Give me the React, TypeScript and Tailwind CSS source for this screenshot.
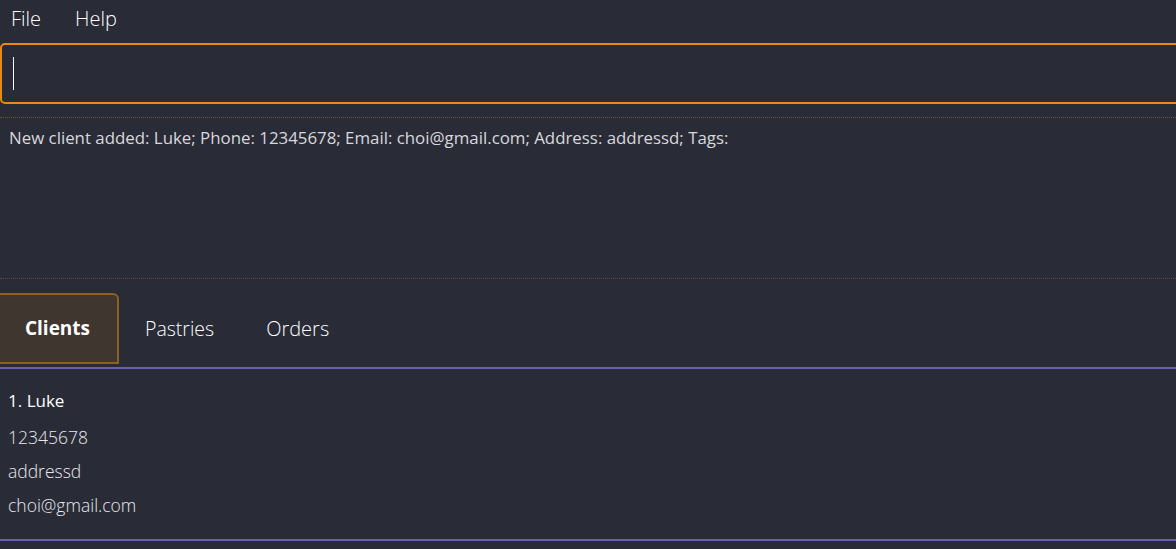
import React from "react";

const font = { fontFamily: '"Open Sans", "Noto Sans", sans-serif' };

interface Client {
  name: string;
  phone: string;
  address: string;
  email: string;
}

const clients: Client[] = [
  { name: "Luke", phone: "12345678", address: "addressd", email: "choi@gmail.com" },
];

const tabs = ["Clients", "Pastries", "Orders"];

export default function App() {
  return (
    <div className="w-[1176px] h-[549px] overflow-hidden bg-[#292b37] text-white flex flex-col" style={font}>
      {/* menu bar */}
      <div className="h-[38px] flex items-center gap-[34px] pl-[11px] text-[20px] font-light text-white">
        <span>File</span>
        <span>Help</span>
      </div>

      {/* command box */}
      <div className="mt-[5px] h-[61px] w-[1190px] border-2 border-[#e8891a] rounded-[5px] flex items-center pl-[11px]">
        <div className="w-px h-[33px] bg-white" />
      </div>

      {/* result display */}
      <div className="mt-[13px] border-t border-dotted border-[#6b5438]" />
      <div className="h-[160px] pl-[9px] pt-[8px] text-[16.85px] leading-[24px] text-[#d8d8dc]">
        New client added: Luke; Phone: 12345678; Email: choi@gmail.com; Address: addressd; Tags:
      </div>
      <div className="border-t border-dotted border-[#5b4d3c]" />

      {/* tabs */}
      <div className="mt-[14px] flex items-end h-[71px]">
        <div className="h-[71px] w-[119px] flex items-center justify-center pr-[2px] bg-[#3e362f] border-2 border-l-0 border-[#8e5f22] rounded-tr-[6px] text-[19px] font-bold text-white">
          {tabs[0]}
        </div>
        <div className="h-[71px] flex items-center pl-[26px] pr-[26px] text-[19.5px] font-light text-white">
          {tabs[1]}
        </div>
        <div className="h-[71px] flex items-center px-[26px] text-[20px] font-light text-white">
          {tabs[2]}
        </div>
      </div>
      <div className="mt-[3px] h-[2px] bg-[#6a5fb2]" />

      {/* client list */}
      {clients.map((c, i) => (
        <div key={c.name} className="h-[170px] pl-[8px] pt-[20px] flex flex-col">
          <div className="text-[17px] font-normal text-white leading-[24px]">
            {i + 1}. {c.name}
          </div>
          <div className="mt-[12px] flex flex-col gap-[10px] text-[17.5px] font-light text-[#e8e8ec] leading-[24px]">
            <span>{c.phone}</span>
            <span>{c.address}</span>
            <span>{c.email}</span>
          </div>
        </div>
      ))}
      <div className="h-[2px] bg-[#6a5fb2]" />
    </div>
  );
}
